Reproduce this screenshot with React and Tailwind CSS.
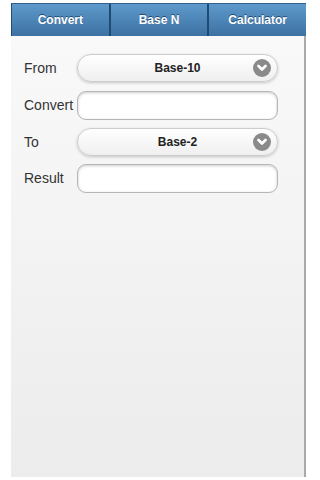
import React from "react";

function Chevron() {
  return (
    <span className="flex h-[18px] w-[18px] items-center justify-center rounded-full bg-[#8a8a8a]">
      <svg width="10" height="8" viewBox="0 0 10 8">
        <path d="M1.5 2 L5 5.5 L8.5 2" fill="none" stroke="#fff" strokeWidth="2.6" strokeLinecap="round" strokeLinejoin="round" />
      </svg>
    </span>
  );
}

function Select({ value }) {
  return (
    <div className="relative flex h-[28px] w-[201px] items-center justify-center rounded-full border border-[#cccccc] bg-gradient-to-b from-[#ffffff] to-[#efefef] shadow-[0_1px_3px_rgba(0,0,0,0.2)]">
      <span className="text-[12px] font-bold text-[#222]">{value}</span>
      <span className="absolute right-[6px] top-[4px]">
        <Chevron />
      </span>
    </div>
  );
}

function Input() {
  return (
    <div className="h-[29px] w-[201px] rounded-[9px] border border-[#b5b5b5] bg-white shadow-[inset_0_1px_3px_rgba(0,0,0,0.2)]" />
  );
}

function Row({ label, children, mt }) {
  return (
    <div className={`flex items-center ${mt}`}>
      <span className="w-[53px] text-[14px] text-[#333]">{label}</span>
      {children}
    </div>
  );
}

export default function App() {
  return (
    <div className="h-[480px] w-[320px] bg-white" style={{ fontFamily: '"Liberation Sans", Arial, sans-serif' }}>
      <div className="ml-[11px] w-[295px] pt-[3px]">
        <div className="flex h-[33px] border-t border-[#2f5f8c] bg-gradient-to-b from-[#5d9acb] to-[#3d71a3]">
          {["Convert", "Base N", "Calculator"].map((t, i) => (
            <div
              key={t}
              className={`flex flex-1 items-center justify-center text-[12px] font-bold text-white [text-shadow:0_-1px_0_#1e4a73] ${i === 0 ? "border-l border-[#234d76]" : "border-l-2 border-[#1f4a72]"}`}
            >
              {t}
            </div>
          ))}
        </div>
        <div className="h-[441px] border-r-2 border-[#a9a9a9] bg-gradient-to-b from-[#f9f9f9] to-[#ececec] pl-[13px] pt-[18px]">
          <Row label="From" mt="">
            <Select value="Base-10" />
          </Row>
          <Row label="Convert" mt="mt-[9px]">
            <Input />
          </Row>
          <Row label="To" mt="mt-[8px]">
            <Select value="Base-2" />
          </Row>
          <Row label="Result" mt="mt-[8px]">
            <Input />
          </Row>
        </div>
      </div>
    </div>
  );
}
